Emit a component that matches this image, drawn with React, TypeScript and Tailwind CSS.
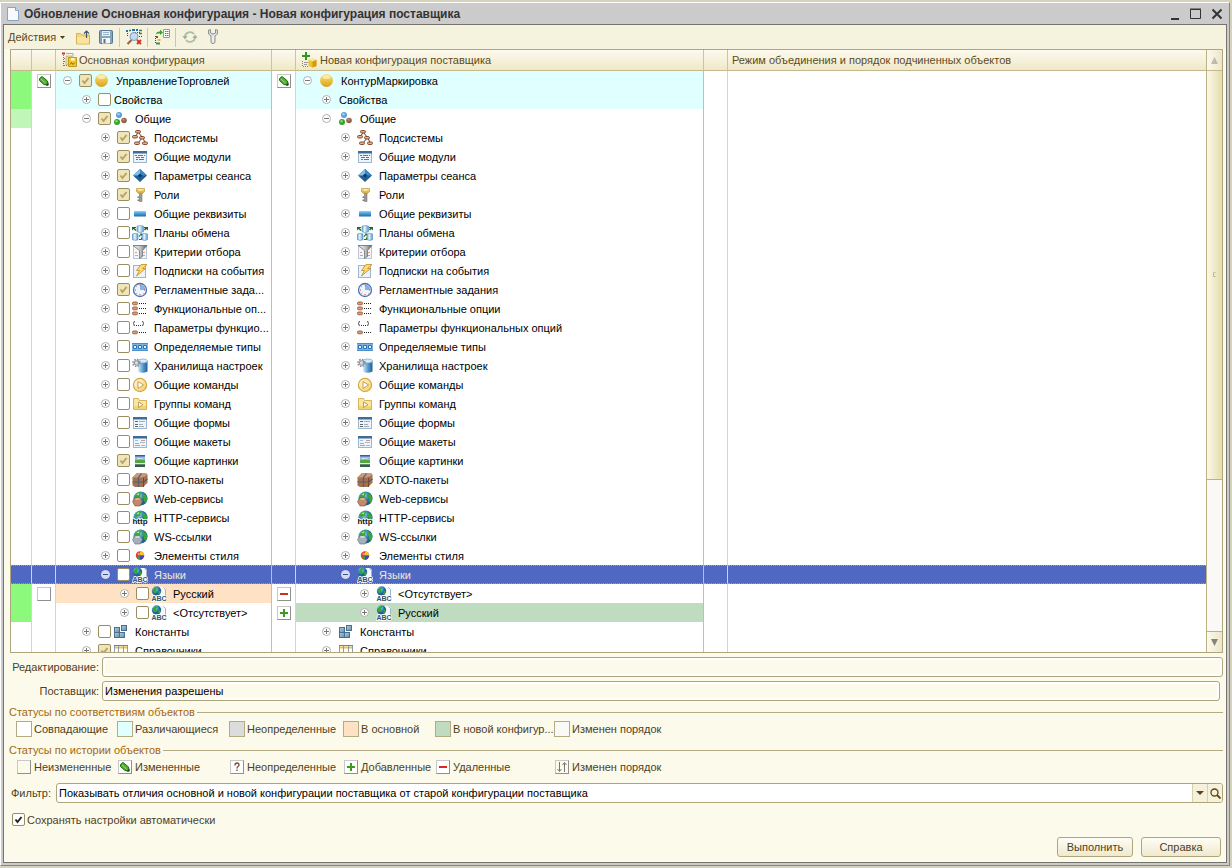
import type { ReactNode } from 'react'

type IconName =
  | 'ball' | 'common' | 'subsystems' | 'modules' | 'session' | 'roles' | 'attributes' | 'exchange'
  | 'criteria' | 'events' | 'jobs' | 'options' | 'optionParams' | 'types' | 'storage' | 'commands'
  | 'commandGroups' | 'forms' | 'templates' | 'pictures' | 'xdto' | 'web' | 'http' | 'ws' | 'style'
  | 'languages' | 'constants' | 'catalogs'

type Mark = 'changed' | 'none' | 'added' | 'removed' | 'unknown' | 'order'

type TreeRow = {
  level: number
  left: string
  right: string
  icon?: IconName
  open?: boolean
  checked?: boolean
  selected?: boolean
  leftBg?: string
  rightBg?: string
  statusBg?: string
  leftMark?: Mark
  rightMark?: Mark
}

const rows: TreeRow[] = [
  { level: 0, left: 'УправлениеТорговлей', right: 'КонтурМаркировка', icon: 'ball', open: true, checked: true, leftBg: 'bg-[#e0ffff]', rightBg: 'bg-[#e0ffff]', statusBg: 'bg-[#8cf97d]', leftMark: 'changed', rightMark: 'changed' },
  { level: 1, left: 'Свойства', right: 'Свойства', leftBg: 'bg-[#e0ffff]', rightBg: 'bg-[#e0ffff]', statusBg: 'bg-[#8cf97d]' },
  { level: 1, left: 'Общие', right: 'Общие', icon: 'common', open: true, checked: true, statusBg: 'bg-[#c0f7b8]' },
  { level: 2, left: 'Подсистемы', right: 'Подсистемы', icon: 'subsystems', checked: true },
  { level: 2, left: 'Общие модули', right: 'Общие модули', icon: 'modules', checked: true },
  { level: 2, left: 'Параметры сеанса', right: 'Параметры сеанса', icon: 'session', checked: true },
  { level: 2, left: 'Роли', right: 'Роли', icon: 'roles', checked: true },
  { level: 2, left: 'Общие реквизиты', right: 'Общие реквизиты', icon: 'attributes' },
  { level: 2, left: 'Планы обмена', right: 'Планы обмена', icon: 'exchange' },
  { level: 2, left: 'Критерии отбора', right: 'Критерии отбора', icon: 'criteria' },
  { level: 2, left: 'Подписки на события', right: 'Подписки на события', icon: 'events' },
  { level: 2, left: 'Регламентные зада...', right: 'Регламентные задания', icon: 'jobs', checked: true },
  { level: 2, left: 'Функциональные оп...', right: 'Функциональные опции', icon: 'options' },
  { level: 2, left: 'Параметры функцио...', right: 'Параметры функциональных опций', icon: 'optionParams' },
  { level: 2, left: 'Определяемые типы', right: 'Определяемые типы', icon: 'types' },
  { level: 2, left: 'Хранилища настроек', right: 'Хранилища настроек', icon: 'storage' },
  { level: 2, left: 'Общие команды', right: 'Общие команды', icon: 'commands' },
  { level: 2, left: 'Группы команд', right: 'Группы команд', icon: 'commandGroups' },
  { level: 2, left: 'Общие формы', right: 'Общие формы', icon: 'forms' },
  { level: 2, left: 'Общие макеты', right: 'Общие макеты', icon: 'templates' },
  { level: 2, left: 'Общие картинки', right: 'Общие картинки', icon: 'pictures', checked: true },
  { level: 2, left: 'XDTO-пакеты', right: 'XDTO-пакеты', icon: 'xdto' },
  { level: 2, left: 'Web-сервисы', right: 'Web-сервисы', icon: 'web' },
  { level: 2, left: 'HTTP-сервисы', right: 'HTTP-сервисы', icon: 'http' },
  { level: 2, left: 'WS-ссылки', right: 'WS-ссылки', icon: 'ws' },
  { level: 2, left: 'Элементы стиля', right: 'Элементы стиля', icon: 'style' },
  { level: 2, left: 'Языки', right: 'Языки', icon: 'languages', open: true, selected: true },
  { level: 3, left: 'Русский', right: '<Отсутствует>', icon: 'languages', leftBg: 'bg-[#ffe1c4]', statusBg: 'bg-[#8cf97d]', leftMark: 'none', rightMark: 'removed' },
  { level: 3, left: '<Отсутствует>', right: 'Русский', icon: 'languages', rightBg: 'bg-[#c0dcc0]', statusBg: 'bg-[#8cf97d]', rightMark: 'added' },
  { level: 1, left: 'Константы', right: 'Константы', icon: 'constants' },
  { level: 1, left: 'Справочники', right: 'Справочники', icon: 'catalogs', checked: true },
]

const indents = ['pl-[5px]', 'pl-[24px]', 'pl-[43px]', 'pl-[62px]']

const matchStatuses = [
  { label: 'Совпадающие', color: 'bg-white' },
  { label: 'Различающиеся', color: 'bg-[#e0ffff]' },
  { label: 'Неопределенные', color: 'bg-[#dcdcdc]' },
  { label: 'В основной', color: 'bg-[#ffe1c4]' },
  { label: 'В новой конфигур...', color: 'bg-[#c0dcc0]' },
  { label: 'Изменен порядок', color: 'bg-[#faf9f5]' },
]

const historyStatuses: { label: string; mark: Mark }[] = [
  { label: 'Неизмененные', mark: 'none' },
  { label: 'Измененные', mark: 'changed' },
  { label: 'Неопределенные', mark: 'unknown' },
  { label: 'Добавленные', mark: 'added' },
  { label: 'Удаленные', mark: 'removed' },
  { label: 'Изменен порядок', mark: 'order' },
]

const globe = (
  <>
    <circle cx="8.500" cy="7.500" r="7" fill="url(#g-globe)" />
    <path d="M2.500 5 5 2l3-1 1.500 1L8 4l.5 1.500L5 7 3 6.500zM11 2.500l3 1.500 1.500 3.500L14 12l-2.500-2 .5-2.500-2-2z" fill="#3aa53c" />
    <path d="M4.500 3.500 7.500 2l-1 2.500z" fill="#c4ee9c" />
  </>
)

const windowFrame = (
  <>
    <rect x="1.500" y="2.500" width="13" height="11" fill="#eef4fb" stroke="#9fb6cb" />
    <path d="M1 2h14v2.500H1z" fill="#3c6e9c" />
  </>
)

const optionRow = (y: number) => (
  <g key={y}>
    <rect x="0.500" y={y} width="5" height="2.800" rx="1.200" fill="#d8a07a" stroke="#8b4a2b" strokeWidth=".8" />
    <path d={`M7 ${y + 1.5}h8`} stroke="#222" strokeDasharray="1 1" />
  </g>
)

const icons: Record<IconName, ReactNode> = {
  ball: (
    <>
      <circle cx="7.500" cy="7.500" r="6.500" fill="url(#g-ball)" />
      <ellipse cx="7.500" cy="4" rx="4" ry="2" fill="#fff6c8" opacity=".7" />
    </>
  ),
  common: (
    <>
      <circle cx="6" cy="4" r="3" fill="#5a9fd6" />
      <circle cx="5.500" cy="3.200" r="1.300" fill="#a5cdec" />
      <circle cx="4" cy="11" r="3" fill="#35a02c" />
      <circle cx="3.500" cy="10.200" r="1.300" fill="#86d868" />
      <circle cx="11" cy="9.500" r="2.800" fill="#94614a" />
      <circle cx="10.500" cy="8.700" r="1.100" fill="#c3937c" />
    </>
  ),
  subsystems: (
    <>
      <path d="M6.500 2.500 3 6.500M6.500 2.500l4 5M10.500 7.500 6 13M10.500 7.500l3 5.500" stroke="#444" fill="none" />
      <g fill="#e0b090" stroke="#8b4a2b">
        <rect x="3.500" y=".5" width="5" height="2.500" rx="1.200" />
        <rect x=".5" y="5.500" width="5" height="2.500" rx="1.200" />
        <rect x="7.500" y="6.500" width="5" height="2.500" rx="1.200" />
        <rect x="2.500" y="12" width="5" height="2.500" rx="1.200" />
        <rect x="10.500" y="12" width="5" height="2.500" rx="1.200" />
      </g>
    </>
  ),
  modules: (
    <>
      {windowFrame}
      <path d="M3 6.500h2M12 6.500h1M4 10.500h2" stroke="#4a7fb0" />
      <path d="M6 6.500h5M4 8.500h4M9 8.500h3M7 10.500h5" stroke="#e0473c" />
    </>
  ),
  session: (
    <>
      <path d="M8 1l7 6.500L8 14 1 7.500z" fill="#1f5f98" />
      <path d="M8 1l7 6.500H8z" fill="#3c87c4" />
      <path d="M8 1 1 7.500h7z" fill="#7cc0ee" />
      <path d="M8 5.500l2.200 2L8 9.500l-2.200-2z" fill="#10375e" />
    </>
  ),
  roles: (
    <>
      <path d="M7.500 6H10v8.500H7.500z" fill="#9a9a96" stroke="#666" strokeWidth=".5" />
      <path d="M5.500 9.500h2v1.500h-2zM5.500 12.500h2V14h-2z" fill="#777" />
      <path d="M4.500 1.500h8v3l-2 2h-4l-2-2z" fill="url(#g-gold)" stroke="#b8963c" strokeWidth=".7" />
      <path d="M7 3h3" stroke="#fff7d0" />
    </>
  ),
  attributes: <rect x="2" y="5" width="12" height="5.500" rx=".6" fill="url(#g-blue)" />,
  exchange: (
    <>
      <g fill="url(#g-cyl)" stroke="#4a8cbf" strokeWidth=".6">
        <path d="M5 1.200v5.600q3 1.400 6.500 0V1.200q-3-1.400-6.500 0z" />
        <path d="M.5 9v5.700q3 1.400 5.500 0V9Q3 7.700.5 9z" />
        <path d="M10 9v5.700q3 1.400 5.500 0V9q-3-1.300-5.500 0z" />
      </g>
      <path d="M0 2h4v1H2.500L4.500 5l-1 1-2-2L0 5.500zM12 2h4v3.500L14.500 4 13 5.500l-1-1L13 3h-1zM7.500 8.500H10V11L9 10l-1.500 2-1-1 2-1.500z" fill="#1c6b2a" />
      <path d="M7 14.500h2.500v-2" stroke="#1c6b2a" fill="none" />
    </>
  ),
  criteria: (
    <>
      <rect x="1.500" y="1.500" width="13" height="13" fill="#f2f6fb" stroke="#b9c8d8" />
      <path d="M3 8.500h2M3 11.500h3M11 8.500h2M10 11.500h3" stroke="#e8988f" />
      <path d="M1 1.500h14l-4.500 5v6l-3 2V6.500z" fill="url(#g-steel)" stroke="#666" strokeWidth=".7" />
    </>
  ),
  events: (
    <>
      <rect x="1.500" y="2.500" width="12" height="12" fill="#eaf2fb" stroke="#9fb6cb" />
      <path d="M9 1.500h6l-4.500 4h3L4.500 13l3-5.500h-3z" fill="#ffdc6c" stroke="#c48a24" strokeWidth=".8" />
    </>
  ),
  jobs: (
    <>
      <circle cx="8" cy="8" r="6.500" fill="#eef5fd" stroke="#4a72ac" strokeWidth="1.300" />
      <path d="M8 8V2.500A5.500 5.500 0 0 1 13.500 8z" fill="#86b2e4" />
      <path d="M7.500 3h1M3 8h1M12 8h1M7.500 12.500h1M4.500 4.500l.6.600M11 11.500l.6.500M4.500 11.500l.6-.6" stroke="#d43c34" />
    </>
  ),
  options: <>{[1, 6, 11].map(optionRow)}</>,
  optionParams: (
    <>
      <path d="M2.500 1Q.5 3.500 2.500 6M10.500 1q2 2.500 0 5" stroke="#444" fill="none" />
      <path d="M4 5.500h1M6 5.500h1M8 5.500h1" stroke="#333" />
      {optionRow(11)}
    </>
  ),
  types: (
    <>
      <path d="M0 4h16v8H0z" fill="#79b4e4" />
      <path d="M0 4.500h16M0 11.500h16" stroke="#4a90cc" />
      <path d="M1.500 6.500h3v3h-3zM6.500 6.500h3v3h-3zM11.500 6.500h3v3h-3z" fill="#e6f3fd" stroke="#2b74b4" />
    </>
  ),
  storage: (
    <>
      <path d="M6 3v10.500q4.500 2.500 9.500 0V3z" fill="url(#g-store)" />
      <ellipse cx="10.800" cy="3" rx="4.700" ry="2" fill="#d6ebfa" stroke="#5a94c0" strokeWidth=".6" />
      <circle cx="4.500" cy="5" r="3.500" fill="none" stroke="#858b90" strokeWidth="1.600" strokeDasharray="1.500 1.250" />
      <circle cx="4.500" cy="5" r="2.300" fill="#d4d8dc" stroke="#858b90" />
    </>
  ),
  commands: (
    <>
      <circle cx="8" cy="8" r="6.600" fill="url(#g-play)" stroke="#d6a93c" strokeWidth="1.200" />
      <path d="M6 4.500v7L11.500 8z" fill="#fff" stroke="#b09040" strokeWidth=".8" />
    </>
  ),
  commandGroups: (
    <>
      <path d="M1.500 2.500h5l1 2h7v9h-13z" fill="#f9e6a0" stroke="#d6b45c" />
      <path d="M2 10h12v3H2z" fill="#f2d470" />
      <path d="M6.500 6v5.500l4.500-2.800z" fill="#fff" stroke="#a88c40" strokeWidth=".8" />
    </>
  ),
  forms: (
    <>
      {windowFrame}
      <path d="M3 6.500h3M3 9.500h3M3 11.500h3" stroke="#666" />
      <path d="M7 6.500h6M7 9.500h4M7 11.500h5" stroke="#a0aebc" />
    </>
  ),
  templates: (
    <>
      {windowFrame}
      <path d="M9 6.500h4M3 9.500h4M3 11.500h5" stroke="#ec8a80" />
      <path d="M8 8.500h5M9 11.500h4M3 6.500h3" stroke="#9fbcda" />
    </>
  ),
  pictures: (
    <>
      <path d="M3 2h10v12H3z" fill="#3f5f94" />
      <path d="M3 3.500h10v4H3z" fill="#8ebcec" />
      <path d="M5 6q1.500-2 3 0 1.500-1.500 3 0z" fill="#fff" />
      <path d="M3 7.500q5-1.500 10 0V10H3z" fill="#56a83c" />
      <path d="M3 10h10v1.500H3z" fill="#e4ecf2" />
      <path d="M3 11.500h10V14H3z" fill="#35603a" />
    </>
  ),
  xdto: (
    <>
      <path d="M.5 5.500 5 1h8.500l2 1.500v8L11.500 15H3L.5 13.500z" fill="#a4704e" />
      <path d="M.5 5.500 5 1h8.500l2 1.500-4 3z" fill="#c99a7a" />
      <path d="M6.500 5.500V15M.5 10h11l4-3M6.500 5.500 9.500 1.500" stroke="#4f5f70" strokeWidth="1.200" fill="none" />
      <path d="M11.500 5.500V15" stroke="#74492e" />
    </>
  ),
  web: (
    <>
      {globe}
      <path d="M3 6.500h5l2.500 4.200L8 15H3L.5 10.700z" fill="#c08a6a" stroke="#7c4c32" strokeWidth=".6" />
      <path d="M3.500 8h4" stroke="#e6bfa6" strokeWidth="1.500" />
    </>
  ),
  http: (
    <>
      {globe}
      <text x="8" y="14" textAnchor="middle" fontSize="8" fontWeight="700" fill="#111" stroke="#fff" strokeWidth="1.500" paintOrder="stroke">http</text>
    </>
  ),
  ws: (
    <>
      {globe}
      <path d="M3 6.500h5l2.500 4.200L8 15H3L.5 10.700z" fill="#a4afba" stroke="#5f6c78" strokeWidth=".6" />
      <path d="M3.500 8h4" stroke="#dbe2e8" strokeWidth="1.500" />
    </>
  ),
  style: (
    <>
      <circle cx="8" cy="7.500" r="4.200" fill="#e0402c" />
      <path d="M8 7.500V3.300a4.200 4.200 0 0 1 4.200 4.200z" fill="#f4c820" />
      <path d="M8 7.500h4.200A4.200 4.200 0 0 1 8 11.700z" fill="#4b46b8" />
      <path d="M8 7.500v4.200a4.200 4.200 0 0 1-3.500-2.200z" fill="#36a038" />
      <circle cx="6.800" cy="6" r="1.200" fill="#fff" opacity=".45" />
    </>
  ),
  languages: (
    <>
      <path d="M6 1h7l2 2v11H6z" fill="#f4f8fc" />
      <path d="M12.500 1.500l2 2V14" stroke="#9fb4c8" fill="none" />
      <circle cx="5.500" cy="5" r="4.700" fill="url(#g-globe)" />
      <path d="M1.500 4 4 1l2.500.5L5 4l1 2-3 1zM8 4.500l1.800 1L8.500 8.500 7 8z" fill="#3aa53c" />
      <text x="8" y="15" textAnchor="middle" fontSize="7" fontWeight="700" fill="#34526c" stroke="#fff" strokeWidth="1.500" paintOrder="stroke">ABC</text>
    </>
  ),
  constants: (
    <g fill="url(#g-tile)" stroke="#4a6f8c">
      <rect x="1.500" y="3.500" width="5" height="5" />
      <rect x="1.500" y="8.500" width="5" height="5" />
      <rect x="6.500" y="8.500" width="5" height="5" />
      <rect x="8.500" y="1.500" width="5" height="5" />
    </g>
  ),
  catalogs: (
    <>
      <path d="M1.500 2.500h13v13h-13zM5.500 2.500v13M10.500 2.500v13" fill="#fff" stroke="#8a9cae" />
      <path d="M2 4.500h3M6 4.500h4M11 4.500h3" stroke="#ecc04c" strokeWidth="2" />
      <path d="M1 2.500h14" stroke="#6d859c" />
    </>
  ),
}

const markGlyphs: Record<Mark, ReactNode> = {
  none: null,
  changed: (
    <>
      <path d="M2.500 4.500 5 2.500l5.500 4.500.5 4-4-.5-4.500-4z" fill="#4fae30" stroke="#1f6a12" />
      <path d="M4 5l4.500 4" stroke="#a6e07c" />
      <path d="M8.500 11.500l3-3v3z" fill="#1b3f12" />
    </>
  ),
  added: <path d="M7 3v8M3 7h8" stroke="#3a9c1c" strokeWidth="2" />,
  removed: <path d="M3 7h8" stroke="#d62a1a" strokeWidth="2" />,
  unknown: <path d="M5 5.500Q5 3 7 3t2 2q0 1-1 1.500T7 8.500M7 9.500V11" stroke="#7a4a34" strokeWidth="1.300" fill="none" />,
  order: <path d="M4.500 2v9M2.500 9l2 2.500 2-2.500M9.500 12V3M7.500 5l2-2.500 2 2.500" stroke="#777" fill="none" />,
}

function Icon({ children }: { children: ReactNode }) {
  return (
    <svg viewBox="0 0 16 16" className="h-4 w-4 shrink-0" aria-hidden="true">
      {children}
    </svg>
  )
}

function MarkBox({ mark }: { mark: Mark }) {
  return (
    <span className={`block h-[14px] w-[14px] shrink-0 border border-t-[#c8c8c8] border-r-[#8f8f8f] border-b-[#8f8f8f] border-l-[#c8c8c8] ${mark === 'order' || mark === 'none' ? 'bg-transparent' : 'bg-white'}`}>
      <svg viewBox="1 1 12 12" className="block h-3 w-3" aria-hidden="true">
        {markGlyphs[mark]}
      </svg>
    </span>
  )
}

function CheckBox({ id, label, checked, muted = true }: { id?: string; label?: string; checked?: boolean; muted?: boolean }) {
  return (
    <span className="relative block h-[13px] w-[13px] shrink-0">
      <input
        id={id}
        type="checkbox"
        aria-label={label}
        defaultChecked={checked}
        className={`block h-[13px] w-[13px] appearance-none rounded-[2px] border border-[#9a8f62] ${checked && muted ? 'bg-[#efe5b8]' : 'bg-white'}`}
      />
      {checked && (
        <svg viewBox="0 0 13 13" className="pointer-events-none absolute inset-0" aria-hidden="true">
          <path d="M3.500 6.500 5.500 9 9.500 4" fill="none" stroke={muted ? '#b5a566' : '#222'} strokeWidth="2" />
        </svg>
      )}
    </span>
  )
}

function Toggle({ open, selected }: { open?: boolean; selected?: boolean }) {
  return (
    <button type="button" aria-label={open ? 'Свернуть' : 'Развернуть'} className="block h-[13px] w-[13px] shrink-0">
      <svg viewBox="0 0 13 13" className="block" aria-hidden="true">
        <circle cx="6.500" cy="6.500" r="4" fill={selected ? '#d5dcf3' : '#fff'} stroke={selected ? '#d5dcf3' : '#b0b0b0'} />
        <path d={open ? 'M4 6.500h5' : 'M4 6.500h5M6.500 4v5'} stroke={selected ? '#3b4f94' : '#777'} />
      </svg>
    </button>
  )
}

function TreeCell({ row, side }: { row: TreeRow; side: 'left' | 'right' }) {
  const text = side === 'left' ? row.left : row.right
  return (
    <div className={`flex h-[19px] items-center overflow-hidden ${indents[row.level]}`}>
      <Toggle open={row.open} selected={row.selected} />
      <span className="w-[5px] shrink-0" />
      {side === 'left' && (
        <span className="pr-[2px]">
          <CheckBox label={text} checked={row.checked} />
        </span>
      )}
      {row.icon && (
        <span className="pr-[5px]">
          <Icon>{icons[row.icon]}</Icon>
        </span>
      )}
      <span className="pl-px whitespace-nowrap">{text}</span>
    </div>
  )
}

function TreeTable() {
  const head = 'border-r border-r-[#cdc49c] border-b border-b-[#c3b98c] p-0 text-left font-normal whitespace-nowrap'
  return (
    <table className="w-full table-fixed border-separate border-spacing-0">
      <colgroup>
        <col className="w-[21px]" />
        <col className="w-[24px]" />
        <col className="w-[216px]" />
        <col className="w-[24px]" />
        <col className="w-[408px]" />
        <col className="w-[24px]" />
        <col />
      </colgroup>
      <thead className="bg-gradient-to-b from-[#fcfaee] to-[#efe8c6] text-[#5c4a1e]">
        <tr className="h-[21px]">
          <th className={head} />
          <th className={head} />
          <th className={head}>
            <div className="flex items-center gap-px pl-[6px]">
              <Icon>
                <path d="M0 1.500h3" stroke="#d4302a" strokeWidth="2" />
                <path d="M1.500 3v11M2 6.500h3M2 9.500h3M2 13.500h3" stroke="#777" fill="none" strokeDasharray="1 1" />
                <path d="M4 1.500h7v3" stroke="#aaa" fill="none" />
                <path d="M4 4h6v9H4z" fill="#ecdca0" stroke="#b09c5c" strokeWidth=".6" />
                <path d="M6.500 5.500h8v9h-8z" fill="#f4c628" stroke="#c09a20" />
                <path d="M9 6h3.500v2.500H9z" fill="#fff8d8" />
                <path d="M8 12.500l1.500-2 1.500 2 2-2" stroke="#5b7a1c" fill="none" />
              </Icon>
              Основная конфигурация
            </div>
          </th>
          <th className={head} />
          <th className={head}>
            <div className="flex items-center gap-[3px] pl-[5px]">
              <Icon>
                <path d="M5 0v8M1 4h8" stroke="#2c9a1c" strokeWidth="2" />
                <path d="M1.500 9v5.500H7" stroke="#888" fill="none" strokeDasharray="1 1" />
                <path d="M3 10.500h4M3 12.500h3" stroke="#999" />
                <path d="M7.500 8l4-1.500 4 1.500v6l-4 1.500-4-1.500z" fill="#eec22c" />
                <path d="M7.500 8l4-1.500 4 1.500-4 1.500z" fill="#fbe88c" />
                <path d="M11.500 9.500l4-1.500v6l-4 1.500z" fill="#cf9b18" />
              </Icon>
              Новая конфигурация поставщика
            </div>
          </th>
          <th className={head} />
          <th className="border-b border-b-[#c3b98c] p-0 pl-[4px] text-left font-normal whitespace-nowrap">
            Режим объединения и порядок подчиненных объектов
          </th>
        </tr>
      </thead>
      <tbody>
        {rows.map((row, index) => {
          const edge = row.selected
            ? 'border-y [border-top-style:dotted] [border-bottom-style:dotted] border-y-[#b5a93c] '
            : ''
          const cell = `${edge}h-[19px] border-r p-0`
          return (
            <tr key={index} className={row.selected ? 'bg-[#4f69c3] text-[#f0ead8]' : 'text-black'}>
              <td className={`${cell} border-r-[#d3d3da] ${row.statusBg ?? ''}`} />
              <td className={`${cell} border-r-[#d3d3da] pl-[5px]`}>{row.leftMark && <MarkBox mark={row.leftMark} />}</td>
              <td className={`${cell} border-r-[#c6bfa0] ${row.leftBg ?? ''}`}>
                <div className="-my-px"><TreeCell row={row} side="left" /></div>
              </td>
              <td className={`${cell} border-r-[#d3d3da] pl-[5px]`}>{row.rightMark && <MarkBox mark={row.rightMark} />}</td>
              <td className={`${cell} border-r-[#c6bfa0] ${row.rightBg ?? ''}`}>
                <div className="-my-px"><TreeCell row={row} side="right" /></div>
              </td>
              <td className={`${cell} border-r-[#d3d3da]`} />
              <td className={`${edge}h-[19px] p-0`} />
            </tr>
          )
        })}
      </tbody>
    </table>
  )
}

function ScrollBar() {
  return (
    <div className="flex w-4 shrink-0 flex-col border-l border-[#bcb184] bg-[#faf9f5]">
      <button type="button" aria-label="Вверх" className="flex h-[21px] items-center justify-center border-b border-[#c3b98c] bg-gradient-to-r from-[#fbf9ec] to-[#ece6c8]">
        <svg viewBox="0 0 9 9" className="h-[9px] w-[9px]"><path d="M4.500 1 8 8H1z" fill="#bdbbae" /></svg>
      </button>
      <div className="flex min-h-0 flex-1 flex-col">
        <div className="flex h-[73%] items-center justify-center border-b border-[#bcb184] bg-gradient-to-r from-[#fbf8e6] to-[#e6dcae]">
          <span className="h-[5px] w-[3px] rounded-full border border-r-0 border-[#c3b98c]" />
        </div>
      </div>
      <button type="button" aria-label="Вниз" className="flex h-[21px] items-center justify-center border-t border-[#bcb184] bg-gradient-to-r from-[#fbf9ec] to-[#ece6c8]">
        <svg viewBox="0 0 9 9" className="h-[9px] w-[9px]"><path d="M4.500 8 8 1H1z" fill="#85837a" /></svg>
      </button>
    </div>
  )
}

function ToolButton({ label, children }: { label: string; children: ReactNode }) {
  return (
    <button type="button" aria-label={label} className="flex h-5 w-[23px] items-center justify-center">
      <Icon>{children}</Icon>
    </button>
  )
}

function Toolbar() {
  const divider = <span className="mx-[2px] h-[19px] w-px bg-[#cfc79f]" />
  return (
    <div className="flex h-6 items-center bg-[#f5f2dd] pl-[4px]">
      <button type="button" className="flex w-[63px] items-center gap-[4px] text-[#5c4a1e]">
        Действия
        <svg viewBox="0 0 5 3" className="h-[3px] w-[5px]"><path d="M0 0h5L2.500 3z" fill="#4a3c18" /></svg>
      </button>
      <ToolButton label="Открыть">
        <path d="M1.500 4.500h4l1.500 1.500h7.500v9h-13z" fill="#f6d77c" stroke="#d6b058" />
        <path d="M2 8h12v6.500H2z" fill="#fae39c" />
        <path d="M11.500 9V2M9 4.500l2.500-2.500L14 4.500" stroke="#3f5a70" fill="none" strokeWidth="1.200" />
      </ToolButton>
      <ToolButton label="Сохранить">
        <rect x="1.500" y="1.500" width="13" height="13" rx="1" fill="#86a6be" stroke="#56758e" />
        <path d="M4 2h8v5H4z" fill="#e8f1f7" />
        <path d="M5 3.500h6M5 5.500h6" stroke="#9bb3c6" />
        <path d="M4 9h8v5.500H4z" fill="#f4f8fa" />
        <path d="M5.500 10h2v4h-2z" fill="#56758e" />
      </ToolButton>
      {divider}
      <ToolButton label="Найти различия">
        <path d="M0 2h2M6 1h3M10 1h2" stroke="#2c6db0" strokeWidth="2" />
        <path d="M3 1.500h2M13 1.500h3M13 4.500h3" stroke="#2b8a5c" strokeWidth="1.500" />
        <path d="M1.500 4v4M9 3.500h6M13 7.500h3" stroke="#3a4650" strokeDasharray="1 1" />
        <path d="M5.500 11l-4 4" stroke="#a0623c" strokeWidth="2.200" />
        <circle cx="8" cy="7.500" r="4" fill="#c4daf2" stroke="#7c9cc0" />
        <path d="M11 11l4 4M15 11l-4 4" stroke="#d43020" strokeWidth="1.800" />
      </ToolButton>
      {divider}
      <ToolButton label="Порядок">
        <path d="M2 5.500q0-3 4-3V.500l3 3-3 2.500V4.500q-2.500-.5-4 1z" fill="#3fa02c" />
        <path d="M9.500.500h6v8h-6z" fill="#fff" stroke="#8a9ca8" />
        <path d="M11 2.500h1M11 4.500h1M11 6.500h1" stroke="#3c8a50" />
        <path d="M12.500 2.500h2M12.500 4.500h2M12.500 6.500h2" stroke="#56808f" />
        <path d="M1.500 7v8" stroke="#444" strokeDasharray="1 1" />
        <path d="M2 8h2" stroke="#7a5a34" strokeWidth="2" />
        <path d="M3.500 11h3" stroke="#e8bd3c" strokeWidth="2" />
        <path d="M2 14.500h4" stroke="#3c8a6c" strokeWidth="2" />
      </ToolButton>
      {divider}
      <ToolButton label="Обновить">
        <path d="M3 7.500A5 4.500 0 0 1 12 5M13 8.500A5 4.500 0 0 1 4 11" stroke="#aebcaa" strokeWidth="1.800" fill="none" />
        <path d="M.5 7h5L3 10.500zM10.500 9h5L13 5.500z" fill="#9eb09a" />
      </ToolButton>
      <ToolButton label="Настройка">
        <path d="M3.500 1v4l2.500 2v6.500q2 2.500 4 0V7l2.500-2V1l-2-.5V4L8 5 5.500 4V.500z" fill="#dcdede" stroke="#858a8a" strokeWidth=".9" />
        <path d="M8 7v6" stroke="#fff" />
      </ToolButton>
    </div>
  )
}

function Group({ title, children }: { title: string; children: ReactNode }) {
  return (
    <section className="pl-[5px]">
      <h2 className="flex h-4 items-center gap-[2px] text-[#a5680f] after:h-px after:flex-1 after:bg-[#b5ab83]">{title}</h2>
      <ul className="mb-1 grid h-[18px] grid-cols-[101px_112px_114px_92px_119px_1fr] items-center pl-[7px] whitespace-nowrap">{children}</ul>
    </section>
  )
}

function TextField({ id, label, value }: { id: string; label: string; value: string }) {
  return (
    <div className="flex items-center gap-[3px]">
      <label htmlFor={id} className="w-[95px] shrink-0 text-right">{label}</label>
      <input
        id={id}
        readOnly
        defaultValue={value}
        className="h-5 min-w-0 flex-1 rounded-[3px] border border-[#b0a67e] bg-[#fcfaeb] px-[2px] text-black shadow-[inset_0_0_0_2px_#fff]"
      />
    </div>
  )
}

function BottomPanel() {
  const button = 'h-5 rounded-[3px] border border-[#b0a67e] bg-gradient-to-b from-[#fefdf6] to-[#efe9cd]'
  return (
    <div className="flex flex-col pr-[3px] text-[#4d3f1e]">
      <div className="flex flex-col gap-1 pt-1 pb-[3px]">
        <TextField id="editing" label="Редактирование:" value="" />
        <div className="pr-[3px]">
          <TextField id="vendor" label="Поставщик:" value="Изменения разрешены" />
        </div>
      </div>

      <Group title="Статусы по соответствиям объектов">
        {matchStatuses.map((status) => (
          <li key={status.label} className="flex items-center gap-[2px]">
            <span className={`h-4 w-4 shrink-0 border border-[#b5ab83] ${status.color}`} />
            {status.label}
          </li>
        ))}
      </Group>
      <Group title="Статусы по истории объектов">
        {historyStatuses.map((status) => (
          <li key={status.label} className="flex items-center gap-[3px] pl-px">
            <MarkBox mark={status.mark} />
            {status.label}
          </li>
        ))}
      </Group>

      <div className="flex items-center gap-[5px] pt-[3px] pl-[7px]">
        <label htmlFor="filter">Фильтр:</label>
        <div className="flex h-5 flex-1 overflow-hidden rounded-[3px] border border-[#b0a67e] bg-white">
          <div className="relative flex flex-1">
            <select id="filter" className="w-full appearance-none px-[2px] text-black">
              <option>Показывать отличия основной и новой конфигурации поставщика от старой конфигурации поставщика</option>
            </select>
            <span className="pointer-events-none absolute inset-y-0 right-0 flex w-[15px] items-center justify-center border-l border-[#d8d0ac] bg-[#f5f1dc]">
              <svg viewBox="0 0 8 4" className="h-1 w-2"><path d="M0 0h8L4 4z" fill="#5c4608" /></svg>
            </span>
          </div>
          <button type="button" aria-label="Выбрать" className="flex w-[15px] items-center justify-center border-l border-[#d8d0ac] bg-[#f5f1dc]">
            <svg viewBox="0 0 11 11" className="h-[11px] w-[11px]">
              <circle cx="4.500" cy="4.500" r="3.500" fill="none" stroke="#5c4608" strokeWidth="1.300" />
              <path d="M7 7l3.500 3.500" stroke="#5c4608" strokeWidth="1.800" />
            </svg>
          </button>
        </div>
      </div>

      <div className="flex h-[33px] items-center gap-[2px] pl-[8px]">
        <CheckBox id="autosave" checked muted={false} />
        <label htmlFor="autosave">Сохранять настройки автоматически</label>
      </div>
      <div className="flex justify-end gap-2 pt-px pr-[2px] pb-[5px]">
        <button type="button" className={`w-[76px] ${button}`}>Выполнить</button>
        <button type="button" className={`w-[80px] ${button}`}>Справка</button>
      </div>
    </div>
  )
}

function TitleBar() {
  return (
    <header className="flex h-[21px] items-center text-[#333] select-none">
      <svg viewBox="0 0 12 14" className="ml-[4px] h-[14px] w-3" aria-hidden="true">
        <path d="M.5.500h8l3 3v10H.5z" fill="#f6fafd" stroke="#8aa4bd" />
        <path d="M8.500.500v3h3" fill="#cfe0ee" stroke="#8aa4bd" />
      </svg>
      <h1 className="flex-1 pl-[5px] text-[12px] font-bold whitespace-nowrap">
        Обновление Основная конфигурация - Новая конфигурация поставщика
      </h1>
      <div className="flex items-center gap-[9px] pr-[4px]">
        <button type="button" aria-label="Свернуть окно">
          <svg viewBox="0 0 12 12" className="block h-3 w-3"><path d="M2 10h8v2H2z" fill="#333" /></svg>
        </button>
        <button type="button" aria-label="Развернуть окно">
          <svg viewBox="0 0 12 12" className="block h-3 w-3"><path d="M.5 1.500h10v9H.5zM0 1h11" fill="none" stroke="#333" /></svg>
        </button>
        <button type="button" aria-label="Закрыть">
          <svg viewBox="0 0 12 12" className="block h-3 w-3"><path d="M1.500 1.500l9 9M10.500 1.500l-9 9" stroke="#333" strokeWidth="2" /></svg>
        </button>
      </div>
    </header>
  )
}

function Gradients() {
  return (
    <svg className="absolute h-0 w-0" aria-hidden="true">
      <defs>
        <linearGradient id="g-gold" x2="0" y2="1">
          <stop offset="0" stopColor="#fff3b4" />
          <stop offset=".5" stopColor="#e9c04c" />
          <stop offset="1" stopColor="#d0a23c" />
        </linearGradient>
        <linearGradient id="g-ball" x2="0" y2="1">
          <stop offset="0" stopColor="#f6dc84" />
          <stop offset=".55" stopColor="#ecc040" />
          <stop offset="1" stopColor="#d8a020" />
        </linearGradient>
        <linearGradient id="g-blue" x2="0" y2="1">
          <stop offset="0" stopColor="#8fd4f8" />
          <stop offset=".5" stopColor="#3f9cd8" />
          <stop offset="1" stopColor="#1f6aa8" />
        </linearGradient>
        <linearGradient id="g-cyl">
          <stop offset="0" stopColor="#6facd6" />
          <stop offset=".4" stopColor="#e6f5fd" />
          <stop offset="1" stopColor="#5a9ccc" />
        </linearGradient>
        <linearGradient id="g-store">
          <stop offset="0" stopColor="#d6ebfa" />
          <stop offset=".5" stopColor="#5c9fd0" />
          <stop offset="1" stopColor="#1f5f94" />
        </linearGradient>
        <linearGradient id="g-tile" x2="1" y2="1">
          <stop offset="0" stopColor="#b4d0e4" />
          <stop offset="1" stopColor="#5f8cb0" />
        </linearGradient>
        <linearGradient id="g-steel">
          <stop offset="0" stopColor="#f4f4f4" />
          <stop offset=".5" stopColor="#c4c8cb" />
          <stop offset="1" stopColor="#5c6063" />
        </linearGradient>
        <radialGradient id="g-globe" cx=".35" cy=".3">
          <stop offset="0" stopColor="#bfe6fb" />
          <stop offset=".6" stopColor="#3c96c8" />
          <stop offset="1" stopColor="#1c6090" />
        </radialGradient>
        <linearGradient id="g-play" x2="1" y2="1">
          <stop offset="0" stopColor="#fffbe0" />
          <stop offset="1" stopColor="#f4cc60" />
        </linearGradient>
      </defs>
    </svg>
  )
}

export default function App() {
  return (
    <div className="h-screen bg-[#d6d2bb] pt-[2px] pr-[2px] pb-[2px] font-['Liberation_Sans',Arial,sans-serif] text-[11px] leading-[14px]">
      <Gradients />
      <div className="flex h-full flex-col border-t border-r border-b border-l border-t-white border-r-[#858585] border-b-[#858585] border-l-white bg-[#cbcbcb] px-[2px] pb-[2px]">
        <TitleBar />
        <main className="flex min-h-0 flex-1 flex-col border border-[#74746c] bg-[#fcfaeb]">
          <Toolbar />
          <div className="flex min-h-0 flex-1 pr-[3px] pl-[6px]">
            <div className="flex min-w-0 flex-1 border border-[#b0a67e] bg-white">
              <div className="min-w-0 flex-1 overflow-hidden">
                <TreeTable />
              </div>
              <ScrollBar />
            </div>
          </div>
          <BottomPanel />
        </main>
      </div>
    </div>
  )
}
